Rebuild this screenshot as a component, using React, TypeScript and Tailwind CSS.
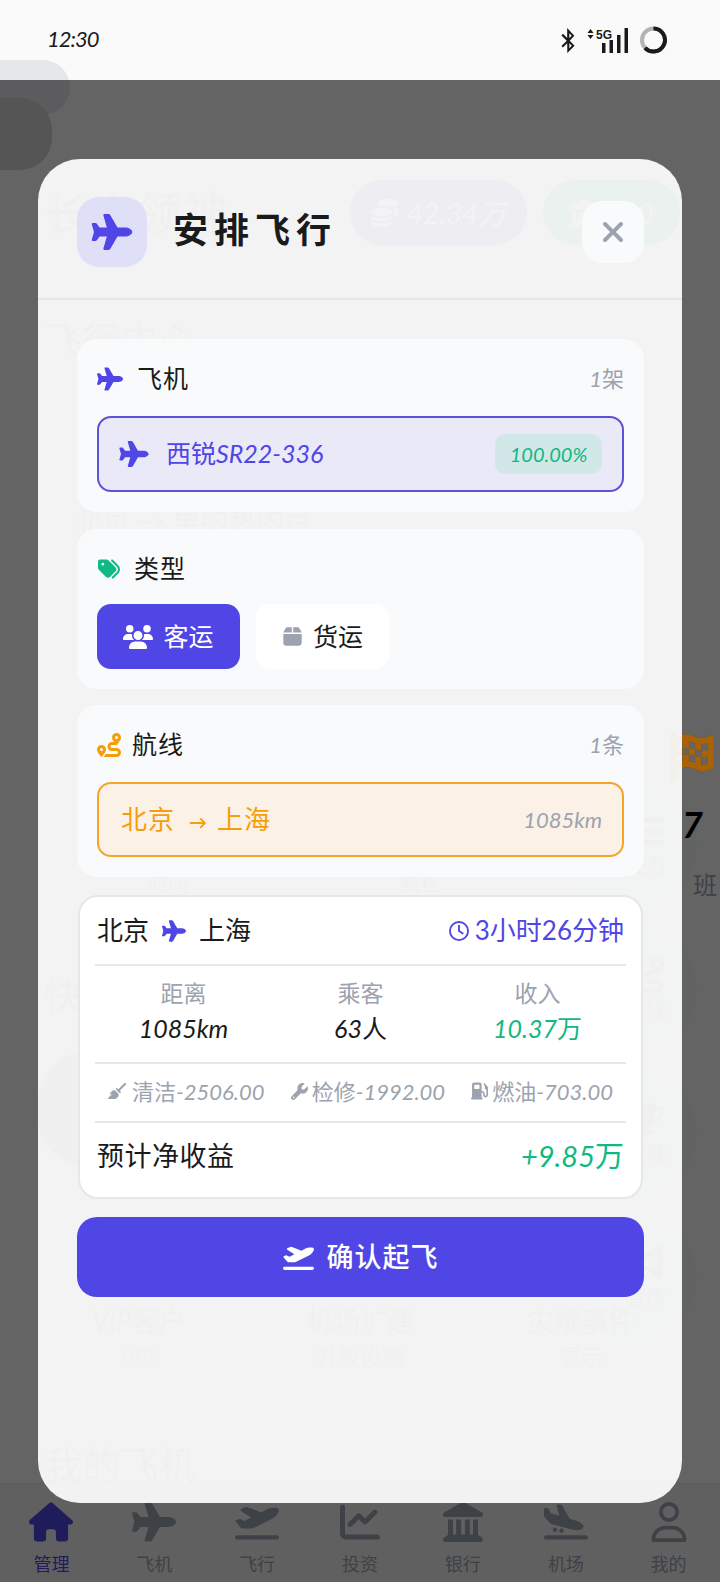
import React from "react";
import {
  FaPlane,
  FaTags,
  FaUsers,
  FaBox,
  FaRoute,
  FaRegClock,
  FaBroom,
  FaWrench,
  FaGasPump,
  FaPlaneDeparture,
  FaPlaneArrival,
  FaHouse,
  FaChartLine,
  FaLandmark,
  FaRegUser,
  FaXmark,
  FaBluetoothB,
  FaCoins,
  FaFlagCheckered,
  FaListUl,
  FaTrophy,
  FaBullhorn,
} from "react-icons/fa6";

const NAV_ITEMS = [
  { label: "管理", icon: FaHouse, active: true },
  { label: "飞机", icon: FaPlane },
  { label: "飞行", icon: FaPlaneDeparture },
  { label: "投资", icon: FaChartLine },
  { label: "银行", icon: FaLandmark },
  { label: "机场", icon: FaPlaneArrival },
  { label: "我的", icon: FaRegUser },
];

const SIDE_ACTIONS = [
  { label: "任务", icon: FaListUl },
  { label: "航线", icon: FaRoute },
  { label: "成就", icon: FaTrophy },
  { label: "宣传", icon: FaBullhorn },
];

// Digits and latin text are slanted in the reference, Chinese is not
function Num({ children }: { children: React.ReactNode }) {
  return <span className="italic">{children}</span>;
}

function StatusBar() {
  return (
    <div className="relative z-20 h-20 shrink-0 pl-[47px] pr-[52px] flex items-start justify-between">
      <span className="mt-[25px] text-[22px] leading-[28px] tracking-[-1px] italic text-[#1a1a1a]">12:30</span>
      <div className="mt-[26px] flex items-center h-7 text-[#1a1a1a]">
        <FaBluetoothB className="w-[16px] h-[25px]" />
        <svg width="44" height="28" viewBox="0 0 44 28" className="ml-[9px]" fill="currentColor">
          <path d="M2.5 7 L5.5 3 L8.5 7 Z M2.5 9 L8.5 9 L5.5 13 Z" />
          <text x="11" y="13" fontSize="12" fontWeight="700" fontFamily="Liberation Sans">5G</text>
          <rect x="17" y="17" width="3.5" height="10" />
          <rect x="24.5" y="14" width="3.5" height="13" />
          <rect x="32" y="9" width="3.5" height="18" />
          <rect x="39.5" y="2" width="3.5" height="25" />
        </svg>
        <svg width="29" height="28" viewBox="0 0 28 28" className="ml-[10px]" fill="none">
          <circle cx="14" cy="14" r="11.5" stroke="#b3b3b3" strokeWidth="4" />
          <path d="M14 2.5 A11.5 11.5 0 1 1 5.5 21.8" stroke="#1a1a1a" strokeWidth="4" />
        </svg>
      </div>
    </div>
  );
}

// The page behind the dialog, only faintly visible through it
function BackgroundPage() {
  return (
    <div className="absolute inset-0 flex flex-col bg-[#fafafa] text-[#9ca3af]">
      <StatusBar />
      <div className="absolute left-[-40px] top-[60px] w-[110px] h-[55px] rounded-[28px] bg-[#e5e7eb]" />
      <div className="absolute left-[-40px] top-[98px] w-[92px] h-[72px] rounded-[32px] bg-[#d4d4d8]" />

      <main className="flex-1 min-h-0 px-[44px]">
        <div className="mt-[100px] h-[65px] flex items-center justify-between -mr-[4px]">
          <span className="text-[46px] leading-none">长安领神</span>
          <div className="flex gap-4">
            <div className="w-[177px] h-[65px] rounded-full bg-[#4f46e5] flex items-center justify-center gap-2 text-white text-[28px]">
              <FaCoins className="w-7 h-7" />
              <Num>42.34万</Num>
            </div>
            <div className="w-[137px] h-[65px] rounded-full bg-[#10b981] flex items-center justify-center gap-2 text-white text-[28px]">
              <FaLandmark className="w-7 h-7" />
              <Num>100</Num>
            </div>
          </div>
        </div>

        <div className="mt-[72px] text-[38px] leading-[44px]">飞行中心</div>
        <div className="mt-[144px] pl-[30px] text-[28px] leading-[30px]">北京 → 里约热内卢</div>

        <div className="mt-[197px] h-9 flex justify-end -mr-[41px]">
          <FaFlagCheckered className="shrink-0 w-[50px] h-[50px] text-[#f59e0b]" />
        </div>

        <div className="flex">
          <div className="w-10 pt-[204px]">
            <div className="text-[38px] leading-[44px] whitespace-nowrap">快捷</div>
            <div className="mt-[36px] -ml-[6px] w-[140px] h-[114px] rounded-[48px] bg-[#a5b4c8]" />
          </div>
          <div className="ml-16 w-[292px] pt-[101px] flex justify-between text-[20px] leading-7">
            <span>时间</span>
            <span>航程</span>
          </div>
          <div className="ml-auto -mr-[21px] pt-3 flex flex-col gap-[14px]">
            {SIDE_ACTIONS.map((action, i) => (
              <div
                key={action.label}
                className={`w-[142px] h-[130px] rounded-full bg-[#f3f4f6] flex flex-col items-center justify-center text-[#9ca3af] ${i === 0 ? "relative" : ""}`}
              >
                <action.icon className="ml-[40px] w-9 h-9" />
                <span className="ml-[40px] mt-1 text-[20px] leading-6">{action.label}</span>
                {i === 0 && (
                  <>
                    <span className="absolute left-[127px] top-[26px] text-[36px] leading-9 font-bold text-black"><Num>7</Num></span>
                    <span className="absolute left-[138px] top-[87px] text-[24px] leading-9 text-[#9ca3af]">班</span>
                  </>
                )}
              </div>
            ))}
          </div>
        </div>

        <div className="-mt-[37px] -mx-[16px] grid grid-cols-3 text-center">
          <div>
            <div className="text-[27px] leading-8"><Num>VIP</Num>客户</div>
            <div className="mt-[6px] text-[22px] leading-7">0位</div>
          </div>
          <div>
            <div className="text-[27px] leading-8">机场扩建</div>
            <div className="mt-[6px] text-[22px] leading-7">升级设施</div>
          </div>
          <div>
            <div className="text-[27px] leading-8">灾难事件</div>
            <div className="mt-[6px] text-[22px] leading-7">显示</div>
          </div>
        </div>

        <div className="mt-[78px] text-[38px] leading-[30px]">我的飞机</div>
      </main>

      <nav className="h-[99px] shrink-0 bg-[#f0f0f0] border-t border-[#e5e7eb] grid grid-cols-7">
        {NAV_ITEMS.map((item) => (
          <div key={item.label} className="flex flex-col items-center pt-[18px]">
            <item.icon className={`h-10 w-11 ${item.active ? "text-[#4f46e5]" : "text-[#9ca3af]"}`} />
            <span className={`mt-[10px] text-[18px] leading-[24px] ${item.active ? "text-[#4f46e5]" : "text-[#9ca3af]"}`}>
              {item.label}
            </span>
          </div>
        ))}
      </nav>
    </div>
  );
}

function SectionHeader({
  icon,
  title,
  count,
  titleClass,
}: {
  icon: React.ReactNode;
  title: string;
  count?: string;
  titleClass: string;
}) {
  return (
    <div className="h-10 flex items-center justify-between">
      <div className="flex items-center">
        {icon}
        <span className={`mb-[3px] text-[25px] leading-8 tracking-[1px] text-[#1a1a1a] ${titleClass}`}>{title}</span>
      </div>
      {count && (
        <span className="text-[22px] leading-8 text-[#9ca3af]">
          <Num>1</Num>
          {count}
        </span>
      )}
    </div>
  );
}

function FlightDialog() {
  return (
    <div className="absolute left-0 right-0 top-20 bottom-0 z-10 bg-black/60">
      <div className="ml-[38px] mt-[79px] w-[644px] h-[1344px] rounded-[42px] bg-white/[0.92] flex flex-col">
        <div className="h-[141px] shrink-0 pl-[39px] pr-[38px] pt-[6px] flex items-center justify-between border-b-2 border-[#e5e7eb]">
          <div className="flex items-center gap-[26px]">
            <div className="w-[70px] h-[70px] rounded-[22px] bg-[#e0dff8] flex items-center justify-center">
              <FaPlane className="w-[42px] h-[36px] text-[#4f46e5]" />
            </div>
            <h1 className="mb-[6px] text-[35px] leading-[44px] tracking-[6px] font-bold text-[#1a1a1a]">安排飞行</h1>
          </div>
          <button type="button" className="w-[62px] h-[62px] rounded-[20px] bg-[#f9fafb] flex items-center justify-center">
            <FaXmark className="w-8 h-8 text-[#9ca3af]" />
          </button>
        </div>

        <div className="pl-[39px] pr-[38px] pt-[39px] flex flex-col">
          <section className="h-[173px] rounded-[20px] bg-[#f9fafb] px-5 pt-5">
            <SectionHeader
              icon={<FaPlane className="w-[26px] h-[24px] text-[#4f46e5]" />}
              title="飞机"
              count="架"
              titleClass="ml-[14px]"
            />
            <div className="mt-[17px] h-[76px] rounded-[14px] border-2 border-[#5b52d6] bg-[#eae9f8] pl-5 pr-5 flex items-center justify-between">
              <div className="flex items-center gap-[17px] text-[25px] text-[#4f46e5]">
                <FaPlane className="w-[30px] h-[26px]" />
                <span>西锐<Num>SR22-336</Num></span>
              </div>
              <span className="w-[107px] h-10 rounded-[10px] bg-[#d2e8e8] flex items-center justify-center text-[20px] text-[#10b981]">
                <Num>100.00%</Num>
              </span>
            </div>
          </section>

          <section className="mt-[17px] h-[160px] rounded-[20px] bg-[#f9fafb] px-5 pt-5">
            <SectionHeader
              icon={<FaTags className="w-6 h-[22px] text-[#10b981]" />}
              title="类型"
              titleClass="ml-[13px]"
            />
            <div className="mt-[15px] flex gap-4">
              <button type="button" className="w-[143px] h-[65px] rounded-[14px] bg-[#4f46e5] flex items-center justify-center gap-[10px] text-white text-[25px]">
                <FaUsers className="w-[30px] h-6" />
                客运
              </button>
              <button type="button" className="w-[133px] h-[65px] rounded-[14px] bg-white flex items-center justify-center gap-[10px] text-[#1a1a1a] text-[25px]">
                <FaBox className="w-[21px] h-[21px] text-[#9ca3af]" />
                货运
              </button>
            </div>
          </section>

          <section className="mt-4 h-[172px] rounded-[20px] bg-[#f9fafb] px-5 pt-5">
            <SectionHeader
              icon={<FaRoute className="w-6 h-6 text-[#f59e0b]" />}
              title="航线"
              count="条"
              titleClass="ml-[11px]"
            />
            <div className="mt-[17px] h-[75px] rounded-[14px] border-2 border-[#f5a524] bg-[#fbf1e6] pl-[22px] pr-5 flex items-center justify-between">
              <span className="text-[26px] tracking-[1px] text-[#f59e0b]">
                北京<span className="ml-[14px] mr-[9px] text-[18px] font-bold">→</span>上海
              </span>
              <span className="text-[22px] text-[#9ca3af]"><Num>1085km</Num></span>
            </div>
          </section>

          <section className="mt-[18px] mx-px h-[304px] rounded-[20px] border-2 border-[#e5e7eb] bg-white px-[15px]">
            <div className="h-[69px] flex items-center justify-between border-b-2 border-[#e5e7eb] px-[2px]">
              <div className="flex items-center text-[26px] text-[#1a1a1a]">
                北京
                <FaPlane className="mx-[13px] w-6 h-[22px] text-[#4f46e5]" />
                上海
              </div>
              <div className="flex items-center gap-[6px] text-[26px] text-[#4f46e5]">
                <FaRegClock className="w-5 h-5" />
                3小时26分钟
              </div>
            </div>
            <div className="h-[98px] pb-[7px] grid grid-cols-3 content-center text-center border-b-2 border-[#e5e7eb]">
              <div>
                <div className="text-[23px] leading-[30px] text-[#9ca3af]">距离</div>
                <div className="mt-1 text-[25px] leading-[32px] text-[#1a1a1a]"><Num>1085km</Num></div>
              </div>
              <div>
                <div className="text-[23px] leading-[30px] text-[#9ca3af]">乘客</div>
                <div className="mt-1 text-[25px] leading-[32px] text-[#1a1a1a]"><Num>63</Num>人</div>
              </div>
              <div>
                <div className="text-[23px] leading-[30px] text-[#9ca3af]">收入</div>
                <div className="mt-1 text-[25px] leading-[32px] text-[#10b981]"><Num>10.37</Num>万</div>
              </div>
            </div>
            <div className="h-[59px] pb-[3px] flex items-center justify-around border-b-2 border-[#e5e7eb] text-[22px] text-[#9ca3af]">
              <div className="flex items-center gap-[6px]">
                <FaBroom className="w-[18px] h-[18px]" />
                <span>清洁<Num>-2506.00</Num></span>
              </div>
              <div className="flex items-center gap-[4px]">
                <FaWrench className="w-[17px] h-[17px]" />
                <span>检修<Num>-1992.00</Num></span>
              </div>
              <div className="flex items-center gap-[4px]">
                <FaGasPump className="w-[17px] h-[18px]" />
                <span>燃油<Num>-703.00</Num></span>
              </div>
            </div>
            <div className="h-[72px] pb-[6px] flex items-center justify-between px-[2px]">
              <span className="text-[27px] tracking-[0.5px] text-[#1a1a1a]">预计净收益</span>
              <span className="text-[29px] text-[#10b981]"><Num>+9.85</Num>万</span>
            </div>
          </section>

          <button type="button" className="mt-[18px] h-20 rounded-[20px] bg-[#4f46e5] flex items-center justify-center gap-[13px] text-white text-[27px] tracking-[1px] font-medium">
            <FaPlaneDeparture className="w-[31px] h-[27px]" />
            确认起飞
          </button>
        </div>
      </div>

      {/* Flag shows brighter than the dimmed page beside the dialog */}
      <div className="absolute left-[682px] top-[652px] w-[38px] h-[50px] overflow-hidden">
        <FaFlagCheckered className="-ml-[15px] w-[50px] h-[50px] max-w-none text-[#a8620a]" />
      </div>
    </div>
  );
}

export default function App() {
  return (
    <div className="relative w-[720px] h-[1582px] overflow-hidden font-['Lato','Noto_Sans_CJK_SC',sans-serif]">
      <BackgroundPage />
      <FlightDialog />
    </div>
  );
}
